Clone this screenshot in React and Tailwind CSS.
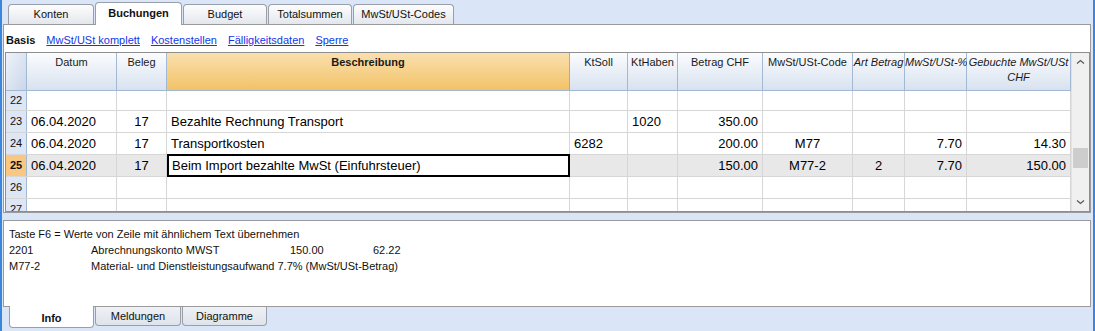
import React from "react";

const cols = [
  { key: "datum", label: "Datum", w: 90, align: "text-left" },
  { key: "beleg", label: "Beleg", w: 50, align: "text-center" },
  { key: "besch", label: "Beschreibung", w: 403, align: "text-left", bold: true, orange: true },
  { key: "soll", label: "KtSoll", w: 58, align: "text-left" },
  { key: "haben", label: "KtHaben", w: 50, align: "text-left" },
  { key: "betrag", label: "Betrag CHF", w: 85, align: "text-right" },
  { key: "code", label: "MwSt/USt-Code", w: 90, align: "text-center" },
  { key: "art", label: "Art Betrag", w: 52, align: "text-center", italic: true },
  { key: "pct", label: "MwSt/USt-%", w: 62, align: "text-right", italic: true },
  { key: "geb", label: "Gebuchte MwSt/USt\nCHF", w: 104, align: "text-right", italic: true },
];

const rows = [
  { n: 22, h: 20 },
  {
    n: 23,
    datum: "06.04.2020",
    beleg: "17",
    besch: "Bezahlte Rechnung Transport",
    haben: "1020",
    betrag: "350.00",
  },
  {
    n: 24,
    datum: "06.04.2020",
    beleg: "17",
    besch: "Transportkosten",
    soll: "6282",
    betrag: "200.00",
    code: "M77",
    pct: "7.70",
    geb: "14.30",
  },
  {
    n: 25,
    active: true,
    datum: "06.04.2020",
    beleg: "17",
    besch: "Beim Import bezahlte MwSt (Einfuhrsteuer)",
    betrag: "150.00",
    code: "M77-2",
    art: "2",
    pct: "7.70",
    geb: "150.00",
  },
  { n: 26 },
  { n: 27 },
];

const topTabs = [
  { label: "Konten", w: 86 },
  { label: "Buchungen", w: 87, active: true },
  { label: "Budget", w: 84 },
  { label: "Totalsummen", w: 84 },
  { label: "MwSt/USt-Codes", w: 101 },
];

const bottomTabs = [
  { label: "Info", w: 85, active: true },
  { label: "Meldungen", w: 86 },
  { label: "Diagramme", w: 85 },
];

function Chevron({ down }) {
  return (
    <svg width="9" height="6" viewBox="0 0 9 6">
      <path
        d={down ? "M1 1.5 L4.5 4.5 L8 1.5" : "M1 4.5 L4.5 1.5 L8 4.5"}
        fill="none"
        stroke="#5a5a5a"
        strokeWidth="1.3"
      />
    </svg>
  );
}

function HeaderRow() {
  return (
    <div className="flex h-[38px] shrink-0 border-b border-[#a3b8d3]">
      <div className="w-[21px] shrink-0 border-r border-[#a3b8d3] bg-linear-to-br from-[#eef3fa] to-[#c9d7ea]" />
      {cols.map((c) => (
        <div
          key={c.key}
          style={{ width: c.w }}
          className={`shrink-0 whitespace-pre border-r pt-[2px] text-center text-[11px] leading-[15px] text-[#1a1a1a] ${
            c.orange
              ? "border-[#ec9f3f] bg-linear-to-b from-[#fae0ad] to-[#f2c266]"
              : "border-[#a3b8d3] bg-linear-to-b from-[#fbfcfe] to-[#d8e2ef]"
          } ${c.bold ? "font-bold" : ""} ${c.italic ? "italic" : ""}`}
        >
          {c.label}
        </div>
      ))}
    </div>
  );
}

function BodyRow({ row }) {
  return (
    <div
      style={{ height: row.h || 22 }}
      className={`flex shrink-0 border-b border-[#d6d6d6] ${row.active ? "bg-[#e8e8e8]" : "bg-white"}`}
    >
      <div
        className={`flex w-[21px] shrink-0 items-center justify-center border-r border-[#a3b8d3] text-[11px] ${
          row.active ? "bg-[#f8c882] font-bold" : "bg-[#dce6f4]"
        }`}
      >
        {row.n}
      </div>
      {cols.map((c) => {
        const focus = row.active && c.key === "besch";
        return (
          <div
            key={c.key}
            style={{ width: c.w }}
            className={`flex shrink-0 items-center overflow-hidden whitespace-nowrap text-[13px] text-black ${
              focus ? "-my-px border-2 border-black bg-white px-[3px]" : "border-r border-[#d6d6d6] px-[4px]"
            } ${c.align === "text-right" ? "justify-end" : c.align === "text-center" ? "justify-center" : "justify-start"}`}
          >
            {row[c.key] || ""}
          </div>
        );
      })}
    </div>
  );
}

export default function App() {
  return (
    <div className="flex h-[331px] w-[1095px] flex-col overflow-hidden border-x-2 border-[#3a86dc] bg-[#dbe5f8] font-['Liberation_Sans',Arial,sans-serif] text-[#111]">
      {/* top tabs */}
      <div className="flex h-[24px] shrink-0 items-end gap-px pl-[6px]">
        {topTabs.map((t) => (
          <div
            key={t.label}
            style={{ width: t.w }}
            className={`relative flex items-center justify-center rounded-t-[4px] border border-b-0 border-[#989fa8] text-[11px] ${
              t.active
                ? "z-10 -mb-px h-[23px] bg-white pb-[2px] font-bold"
                : "h-[20px] bg-linear-to-b from-[#fdfdfd] to-[#e3e7ed]"
            }`}
          >
            {t.label}
          </div>
        ))}
      </div>

      {/* main panel */}
      <div className="ml-px mr-[2px] flex h-[189px] shrink-0 flex-col border border-[#9a9a9a] bg-white">
        <div className="flex h-[27px] shrink-0 gap-[11px] pl-[2px] pt-[8px] text-[11px] leading-[14px]">
          <span className="font-bold">Basis</span>
          <span className="text-[#1237e6] underline">MwSt/USt komplett</span>
          <span className="text-[#1237e6] underline">Kostenstellen</span>
          <span className="text-[#1237e6] underline">Fälligkeitsdaten</span>
          <span className="text-[#1237e6] underline">Sperre</span>
        </div>

        <div className="ml-px flex h-[160px] w-[1085px] shrink-0 overflow-hidden border border-[#8e8e8e]">
          <div className="flex w-[1065px] shrink-0 flex-col overflow-hidden">
            <HeaderRow />
            {rows.map((r) => (
              <BodyRow key={r.n} row={r} />
            ))}
          </div>
          <div className="flex w-[18px] shrink-0 flex-col items-center border-l border-[#e2e2e2] bg-[#f0f0f0]">
            <div className="flex h-[18px] items-center justify-center">
              <Chevron />
            </div>
            <div className="mt-[77px] h-[20px] w-[15px] bg-[#cdcdcd]" />
            <div className="mt-auto flex h-[18px] items-center justify-center">
              <Chevron down />
            </div>
          </div>
        </div>
      </div>

      {/* info panel */}
      <div className="ml-px mr-[2px] mt-[7px] h-[87px] shrink-0 border border-[#9a9a9a] bg-white pl-[5px] pt-[5px] text-[11px] leading-[16px]">
        <div>Taste F6 = Werte von Zeile mit ähnlichem Text übernehmen</div>
        <div className="flex">
          <span className="w-[82px]">2201</span>
          <span className="w-[199px]">Abrechnungskonto MWST</span>
          <span className="w-[83px]">150.00</span>
          <span>62.22</span>
        </div>
        <div className="flex">
          <span className="w-[82px]">M77-2</span>
          <span>Material- und Dienstleistungsaufwand 7.7% (MwSt/USt-Betrag)</span>
        </div>
      </div>

      {/* bottom tabs */}
      <div className="flex items-start gap-px pl-[7px]">
        {bottomTabs.map((t) => (
          <div
            key={t.label}
            style={{ width: t.w }}
            className={`relative flex items-center justify-center rounded-b-[4px] border border-t-0 border-[#989fa8] text-[11px] ${
              t.active
                ? "z-10 -mt-px h-[22px] bg-white pt-[3px] font-bold"
                : "h-[19px] bg-linear-to-b from-[#eef1f5] to-[#dfe4eb]"
            }`}
          >
            {t.label}
          </div>
        ))}
      </div>
    </div>
  );
}
